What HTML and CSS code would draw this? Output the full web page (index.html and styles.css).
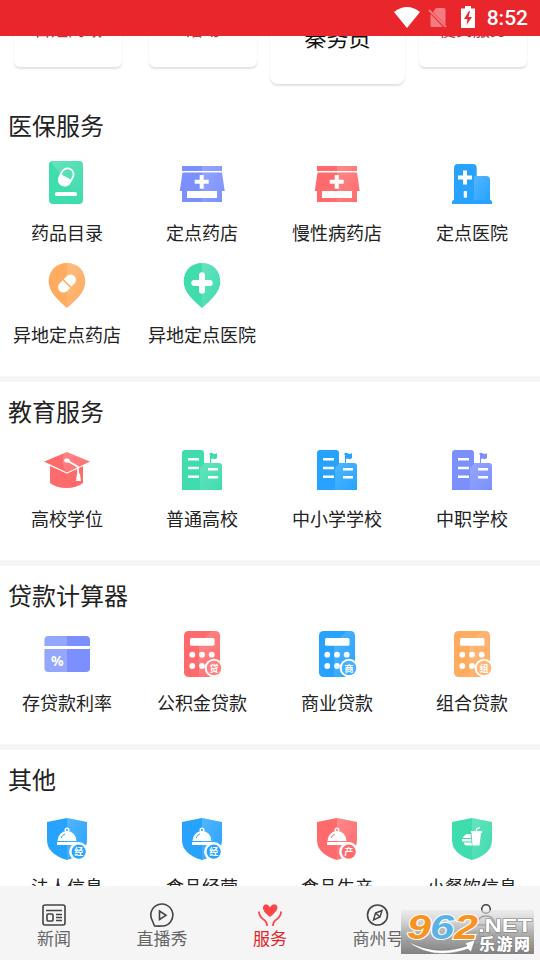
FILE: index.html
```html
<!DOCTYPE html>
<html lang="zh-CN">
<head>
  <meta charset="UTF-8">
  <title>服务</title>
  <link rel="stylesheet" href="styles.css">
</head>
<body>

  <!-- 图标定义 -->
  <svg class="defs" width="0" height="0">
    <defs>
      <linearGradient id="shine" x1="0" y1="0" x2="1" y2="1">
        <stop offset="0" stop-color="#fff" stop-opacity=".2"/>
        <stop offset="1" stop-color="#fff" stop-opacity="0"/>
      </linearGradient>
      <linearGradient id="metal" x1="0" y1="0" x2="0" y2="1">
        <stop offset="0" stop-color="#e4e4e4" stop-opacity=".6"/>
        <stop offset=".5" stop-color="#adadad"/>
        <stop offset="1" stop-color="#777"/>
      </linearGradient>
    </defs>
    <symbol id="shop" viewBox="0 0 49 48">
      <path fill="currentColor" d="M4 6h40v5H4zM4.500 12.400h39.500L46.700 31H44v11H4V31H1.800z"/>
      <path fill="url(#shine)" d="M24 6h20v5H24zM24 12.400h20L46.700 31H44v11H24z"/>
      <path fill="#fff" d="M9 31h30v7H9zM21.700 15h4v4.800h5v4h-5v5h-4v-5h-5v-4h5z"/>
    </symbol>
    <symbol id="school" viewBox="0 0 49 48">
      <path fill="currentColor" d="M4 44V7q0-3 3-3h16q3 0 3 3v10h6V9l-1-1q2-2 4-.5 2 1 4-.5v5q-2 2-4 .5l-2 .5v4h8q3 0 3 3v24z"/>
      <path fill="url(#shine)" d="M22 22l5-5h14q3 0 3 3v24H22z"/>
      <path stroke="#fff" stroke-width="2.600" d="M10 13.300h11M10 22h11M10 30.700h11M30 23.300h10M30 31.300h10"/>
    </symbol>
    <symbol id="calc" viewBox="0 0 49 48">
      <rect x="6" y="1" width="36" height="46" rx="4.500" fill="currentColor"/>
      <path fill="url(#shine)" d="M21 14L34 1h4q4 0 4 4v38q0 4-4 4H21z"/>
      <rect x="12" y="8" width="24.500" height="7.700" rx="1.500" fill="#fff"/>
      <g fill="#fff">
        <circle cx="14.300" cy="24.700" r="2.900"/><circle cx="24" cy="24.700" r="2.900"/><circle cx="33.700" cy="24.700" r="2.900"/>
        <circle cx="14.300" cy="36" r="2.900"/><circle cx="24" cy="36" r="2.900"/>
        <circle cx="36" cy="38" r="9.300"/>
      </g>
      <circle cx="36" cy="38" r="7.300" fill="currentColor"/>
      <circle cx="36" cy="38" r="7.300" fill="#fff" opacity=".15"/>
    </symbol>
    <symbol id="shield" viewBox="0 0 49 48">
      <path fill="currentColor" d="M24 4l20 4v18q0 14-20 20Q4 40 4 26V8z"/>
      <path fill="url(#shine)" d="M24 4l20 4v18q0 14-20 20z"/>
    </symbol>
    <symbol id="dish" viewBox="0 0 49 48">
      <use href="#shield"/>
      <circle cx="24" cy="16" r="1.800" fill="none" stroke="#fff" stroke-width="1.500"/>
      <path fill="#fff" d="M14.500 27q1-9.800 9.500-9.800t9.500 9.800zM14 28h20v3H14z"/>
      <path d="M18 24q1-3 4-4" fill="none" stroke="currentColor"/>
      <circle cx="35.700" cy="37.700" r="9.600" fill="#fff"/>
      <circle cx="35.700" cy="37.700" r="7.100" fill="currentColor"/>
    </symbol>
    <symbol id="pin" viewBox="0 0 49 48">
      <path fill="currentColor" d="M24 1c11 0 18.300 8 18.300 18.500C42.300 30 33 38 24 46 15 38 5.700 30 5.700 19.500 5.700 9 13 1 24 1z"/>
      <path fill="url(#shine)" d="M24 1c11 0 18.300 8 18.300 18.500C42.300 30 33 38 24 46z"/>
    </symbol>
  </svg>

  <div class="status-bar">
    <svg width="26" height="22" viewBox="0 0 26 22"><path fill="#fff" d="M0 5Q13-5 26 5L13 21z"/></svg>
    <svg class="sim" width="20" height="22" viewBox="0 0 20 22"><path fill="#f47c80" d="M8 1h8q1.500 0 1.500 1.500V18L5 5zM2.500 7L15 20H4q-1.500 0-1.500-1.500z"/><path stroke="#f47c80" stroke-width="1.800" d="M1 3l17 17"/></svg>
    <svg class="battery" width="14" height="22" viewBox="0 0 14 22"><path fill="#fff" d="M4 0h6v2.500h4V22H0V2.500h4z"/><path fill="#e8262c" d="M8 5l-5 8h3.500L5.500 19l5.500-8H7.500L9 5z"/></svg>
    <span class="time">8:52</span>
  </div>

  <div class="content">
    <div class="tabs">
      <div class="tab">百姓问政</div>
      <div class="tab">活动</div>
      <div class="tab tab-active">秦务员</div>
      <div class="tab">便民服务</div>
    </div>

    <div class="section">
      <h2>医保服务</h2>
      <div class="grid">
        <div class="item green">
          <svg class="icon" viewBox="0 0 49 48">
            <rect x="6" y="1" width="34" height="43" rx="4" fill="currentColor"/>
            <path fill="url(#shine)" d="M10 1h26q4 0 4 4v35q0 2-1 3L8 2z"/>
            <g transform="rotate(28 23.300 16.700)">
              <rect x="17.300" y="8" width="12" height="18" rx="6" fill="none" stroke="#fff" stroke-width="1.800"/>
              <path fill="#fff" d="M17 17h12.600v3q0 6.500-6.300 6.500T17 20z"/>
            </g>
            <rect x="12" y="32" width="22" height="4" rx="1.500" fill="#fff"/>
          </svg>
          <span>药品目录</span>
        </div>
        <div class="item purple">
          <svg class="icon"><use href="#shop"/></svg>
          <span>定点药店</span>
        </div>
        <div class="item red">
          <svg class="icon"><use href="#shop"/></svg>
          <span>慢性病药店</span>
        </div>
        <div class="item blue">
          <svg class="icon" viewBox="0 0 49 48">
            <path fill="currentColor" d="M6 40V8q0-4 4-4h14.700q4 0 4 4v8H38q4 0 4 4v20q2 0 2 2v2H4v-2q0-2 2-2z"/>
            <path fill="url(#shine)" d="M26 16h12q4 0 4 4v20H26z"/>
            <path fill="#fff" d="M15 10.500h4v5h5v4h-5v5h-4v-5h-5v-4h5z"/>
            <rect x="15.700" y="31" width="3.300" height="6.700" rx="1" fill="#fff"/>
          </svg>
          <span>定点医院</span>
        </div>
        <div class="item orange">
          <svg class="icon" viewBox="0 0 49 48">
            <use href="#pin"/>
            <g transform="rotate(45 24 21.500)">
              <rect x="18.700" y="11" width="10.600" height="21" rx="5.300" fill="#fff"/>
              <path stroke="currentColor" stroke-width="1.500" d="M18 21.500h12"/>
            </g>
          </svg>
          <span>异地定点药店</span>
        </div>
        <div class="item green">
          <svg class="icon" viewBox="0 0 49 48">
            <use href="#pin"/>
            <path stroke="#fff" stroke-width="6" stroke-linecap="round" d="M24 13.300v15.400M16.300 21h15.400"/>
          </svg>
          <span>异地定点医院</span>
        </div>
      </div>
    </div>

    <div class="section">
      <h2>教育服务</h2>
      <div class="grid">
        <div class="item red">
          <svg class="icon" viewBox="0 0 49 48">
            <path fill="currentColor" d="M7 20l17 7.500L40 20v17q-6 5-16.500 5T7 37z"/>
            <path fill="currentColor" stroke="#fff" d="M0 15.600L24 5.500l24 10.100L24 27z"/>
            <path fill="url(#shine)" d="M21 7l3-1 23 9.600-23 10.900q-7-9-3-19.500z"/>
            <path fill="none" stroke="#fff" stroke-width="2" d="M24 14.500l10.500 6 1 9"/>
            <ellipse cx="24" cy="14.500" rx="2.800" ry="2" fill="#fff"/>
            <path fill="#fff" d="M34 28h3l1 7h-5z"/>
          </svg>
          <span>高校学位</span>
        </div>
        <div class="item green">
          <svg class="icon"><use href="#school"/></svg>
          <span>普通高校</span>
        </div>
        <div class="item blue">
          <svg class="icon"><use href="#school"/></svg>
          <span>中小学学校</span>
        </div>
        <div class="item purple">
          <svg class="icon"><use href="#school"/></svg>
          <span>中职学校</span>
        </div>
      </div>
    </div>

    <div class="section">
      <h2>贷款计算器</h2>
      <div class="grid">
        <div class="item purple">
          <svg class="icon" viewBox="0 0 49 48">
            <rect x="1.500" y="6" width="45.500" height="36" rx="4" fill="currentColor"/>
            <path fill="#fff" opacity=".2" d="M5.500 6H24v36H5.500q-4 0-4-4V10q0-4 4-4z"/>
            <path fill="#fff" d="M1 16h47v3H1z"/>
            <text class="percent" x="14.300" y="35.500">%</text>
          </svg>
          <span>存贷款利率</span>
        </div>
        <div class="item red">
          <svg class="icon" viewBox="0 0 49 48"><use href="#calc"/><text class="badge" x="36" y="41.500">贷</text></svg>
          <span>公积金贷款</span>
        </div>
        <div class="item blue">
          <svg class="icon" viewBox="0 0 49 48"><use href="#calc"/><text class="badge" x="36" y="41.500">商</text></svg>
          <span>商业贷款</span>
        </div>
        <div class="item orange">
          <svg class="icon" viewBox="0 0 49 48"><use href="#calc"/><text class="badge" x="36" y="41.500">组</text></svg>
          <span>组合贷款</span>
        </div>
      </div>
    </div>

    <div class="section">
      <h2>其他</h2>
      <div class="grid">
        <div class="item blue">
          <svg class="icon" viewBox="0 0 49 48"><use href="#dish"/><text class="badge" x="35.700" y="41.200">经</text></svg>
          <span>法人信息</span>
        </div>
        <div class="item blue">
          <svg class="icon" viewBox="0 0 49 48"><use href="#dish"/><text class="badge" x="35.700" y="41.200">经</text></svg>
          <span>食品经营</span>
        </div>
        <div class="item red">
          <svg class="icon" viewBox="0 0 49 48"><use href="#dish"/><text class="badge" x="35.700" y="41.200">产</text></svg>
          <span>食品生产</span>
        </div>
        <div class="item green">
          <svg class="icon" viewBox="0 0 49 48">
            <use href="#shield"/>
            <path fill="#fff" d="M23 17h11v2h-1l-1.500 12.500h-7L23.500 19H23zM15 24q1-4 6-4h1.500l.5 4zM14 25h9.300v2.500H14zM15.500 28.500h8l.5 3h-5q-3 0-3-3z"/>
            <path fill="none" stroke="#fff" stroke-width="1.200" d="M28 17l1-2.500 3-.8"/>
          </svg>
          <span>小餐饮信息</span>
        </div>
      </div>
    </div>
  </div>

  <div class="nav">
    <div class="nav-item">
      <svg width="26" height="26" viewBox="0 0 26 26" fill="none" stroke="#444" stroke-width="1.600">
        <rect x="2" y="3" width="22" height="20" rx="2"/>
        <path d="M5 8.500h16M15 12.500h6M15 15.500h6M15 18.500h6"/>
        <rect x="6" y="12" width="6" height="7" rx="1"/>
      </svg>
      <span>新闻</span>
    </div>
    <div class="nav-item">
      <svg width="26" height="26" viewBox="0 0 26 26" fill="none" stroke="#444" stroke-width="1.600">
        <path stroke-linejoin="round" d="M5.500 24L3.300 18.500A11 11 0 1 1 13.500 24Q10 24.200 5.500 24z"/>
        <path d="M10.500 9v8.500l6.500-4.200z"/>
      </svg>
      <span>直播秀</span>
    </div>
    <div class="nav-item active">
      <svg width="26" height="26" viewBox="0 0 26 26">
        <path fill="#fe4649" d="M13 15Q5 9 6 5q1.500-4 5-2 1.500 1 2 2.500 1-2 2.500-2.700 4-1.800 5 2Q21 9 13 15z"/>
        <path fill="none" stroke="#fe4649" stroke-width="1.800" d="M2 9.500q0 5 4.500 8 3.500 2 3.500 6.500M24 9.500q0 5-4.500 8-3.500 2-3.500 6.500"/>
      </svg>
      <span>服务</span>
    </div>
    <div class="nav-item">
      <svg width="26" height="26" viewBox="0 0 26 26" fill="none" stroke="#444" stroke-width="1.600">
        <circle cx="12.500" cy="13" r="10"/>
        <path stroke-width="1.400" d="M17 8.500l-2 6.500-6.500 3 2-7zM11 11.500l3.500 3"/>
      </svg>
      <span>商州号</span>
    </div>
    <div class="nav-item">
      <svg width="26" height="26" viewBox="0 0 26 26" fill="none" stroke="#444" stroke-width="1.600">
        <circle cx="13" cy="7" r="4.300"/>
        <path d="M4 23q1-9 9-9t9 9z"/>
      </svg>
      <span>我的</span>
    </div>
    <svg class="watermark" width="133" height="44" viewBox="0 0 133 44">
      <rect width="133" height="44" fill="url(#metal)" opacity=".92"/>
      <path fill="#fff" stroke="#777" stroke-width=".5" d="M6 31q29 16 60 5l-2-3 10-3-4 12-3-3Q30 51 6 31z"/>
      <g class="digits">
        <text x="6" y="28.500" textLength="24" lengthAdjust="spacingAndGlyphs" fill="#f7931e">9</text>
        <text x="29" y="28.500" textLength="24" lengthAdjust="spacingAndGlyphs" fill="#5ab3e8">6</text>
        <text x="53" y="28.500" textLength="24" lengthAdjust="spacingAndGlyphs" fill="#f7931e">2</text>
      </g>
      <text class="net" x="77" y="22" textLength="54" lengthAdjust="spacingAndGlyphs">.NET</text>
      <text class="site" x="78" y="39.500" textLength="51">乐游网</text>
    </svg>
  </div>

</body>
</html>
```

FILE: styles.css
```css
* {
  box-sizing: border-box;
}
body {
  margin: 0;
  height: 960px;
  display: flex;
  flex-direction: column;
  overflow: hidden;
  background: #fff;
  color: #222;
  font-family: "Noto Sans CJK SC", sans-serif;
}
.defs {
  position: absolute;
}

/* 状态栏 */
.status-bar {
  flex: none;
  height: 36px;
  padding-right: 12px;
  background: #e8262c;
  display: flex;
  align-items: center;
  justify-content: flex-end;
}
.status-bar svg {
  margin-bottom: 1px;
}
.status-bar .sim {
  margin-left: 8px;
}
.status-bar .battery {
  margin: 0 12px 2px 13px;
}
.time {
  color: #fff;
  font: 500 21px/38px Roboto, sans-serif;
}

.content {
  flex: 1;
  min-height: 0;
  overflow: hidden;
}

/* 顶部卡片 */
.tabs {
  height: 60px;
  display: flex;
  align-items: flex-start;
  overflow: hidden;
}
.tab {
  flex: none;
  width: 108px;
  height: 69px;
  margin: -38px 13px 0 14px;
  padding-top: 18px;
  border-radius: 6px;
  box-shadow: 0 2px 2px #e2e2e2;
  color: #b8383a;
  font-size: 17px;
  line-height: 26px;
  text-align: center;
}
.tab-active {
  width: 135px;
  height: 86px;
  margin: -38px 0 0;
  padding-top: 23px;
  border-radius: 8px;
  color: #111;
  font-size: 22px;
  line-height: 30px;
}

.section {
  height: 184px;
  border-bottom: 6px solid #f5f5f5;
}
.section:nth-child(2) {
  height: 286px;
}
h2 {
  margin: 0;
  height: 58px;
  padding-left: 8px;
  font-size: 24px;
  font-weight: normal;
  line-height: 58px;
}
.grid {
  display: grid;
  grid-template-columns: repeat(4, 135px);
  grid-auto-rows: 102px;
}
.item {
  display: flex;
  flex-direction: column;
  align-items: center;
  padding-top: 6px;
}
.item span {
  margin: 11px 1px 0 0;
  color: #222;
  font-size: 18px;
  line-height: 26px;
  white-space: nowrap;
}
.icon {
  width: 49px;
  height: 48px;
}
.green { color: #3fdcae; }
.purple { color: #7b90fd; }
.red { color: #ff6b6d; }
.blue { color: #27a3ff; }
.orange { color: #ffab60; }

.badge {
  fill: #fff;
  font-size: 9px;
  font-weight: bold;
  text-anchor: middle;
}
.percent {
  fill: #fff;
  font: bold 14px "Noto Sans", sans-serif;
  text-anchor: middle;
}

/* 底部导航 */
.nav {
  position: relative;
  flex: none;
  height: 74px;
  display: flex;
  background: #f5f5f5;
}
.nav-item {
  width: 108px;
  padding-top: 16px;
  display: flex;
  flex-direction: column;
  align-items: center;
  color: #666;
  font-size: 17px;
  line-height: 20px;
}
.active {
  color: #e3262b;
}
.watermark {
  position: absolute;
  top: 24px;
  right: 6px;
}
.digits text {
  font: italic bold 35px "Liberation Sans", sans-serif;
  stroke: #fff;
  stroke-width: 2px;
  paint-order: stroke;
}
.net {
  fill: #fff;
  stroke: #777;
  stroke-width: 1px;
  paint-order: stroke;
  font: bold 19px "Liberation Sans", sans-serif;
}
.site {
  fill: #fff;
  stroke: #777;
  stroke-width: 1px;
  paint-order: stroke;
  font-size: 16px;
  font-weight: 900;
}
```
